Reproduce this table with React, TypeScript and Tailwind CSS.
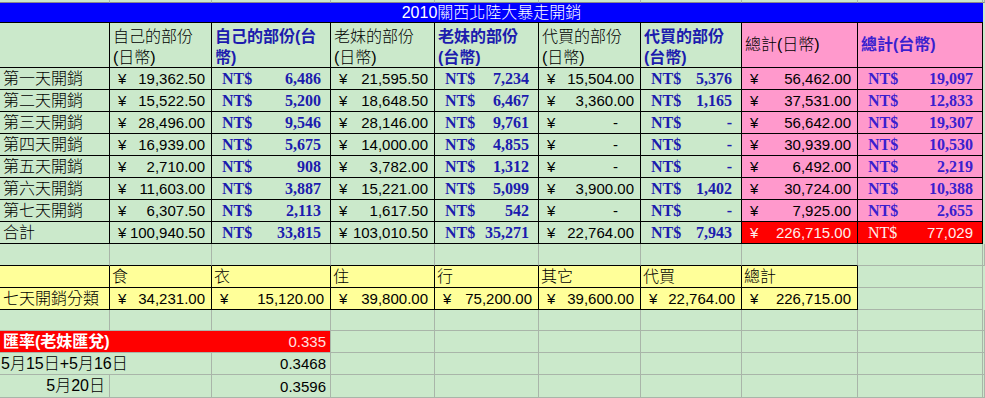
import React from 'react';

// column widths of the sheet (A..I plus the sliver at the right edge)
const COL = [
  'w-[110px]',
  'w-[102px]',
  'w-[119px]',
  'w-[104px]',
  'w-[104px]',
  'w-[102px]',
  'w-[101px]',
  'w-[116px]',
  'w-[125px]',
  'w-[2px]',
];

const GRID = 'border-[#a9b5a9]';
const GREEN = 'bg-[#cbe9cb]';
const PINK = 'bg-[#ff99cc]';
const YELLOW = 'bg-[#ffff99]';
const RED = 'bg-[#ff0000]';

const NUM = "font-['Liberation_Sans_Narrow','Liberation_Sans',sans-serif] text-[15px] font-normal";
const BOLD = "font-['Liberation_Serif',serif] font-bold text-[16px]";

type CellProps = {
  col: number;
  className?: string;
  children?: React.ReactNode;
};

const Cell: React.FC<CellProps> = ({ col, className = '', children }) => (
  <div className={`${COL[col]} shrink-0 box-border border-r border-b overflow-hidden whitespace-nowrap ${className}`}>{children}</div>
);

const Yen: React.FC<{ v: string; dash?: boolean }> = ({ v, dash }) => (
  <div className={`flex h-full items-center justify-between pl-[8px] ${dash ? 'pr-[22px]' : 'pr-[6px]'} ${NUM}`}>
    <span>¥</span>
    <span>{v}</span>
  </div>
);

const Nt: React.FC<{ v: string; tone: string }> = ({ v, tone }) => (
  <div className={`flex h-full items-center justify-between pl-[10px] pr-[9px] ${BOLD} ${tone}`}>
    <span>NT$</span>
    <span>{v}</span>
  </div>
);

const ROWS: string[][] = [
  ['第一天開銷', '19,362.50', '6,486', '21,595.50', '7,234', '15,504.00', '5,376', '56,462.00', '19,097'],
  ['第二天開銷', '15,522.50', '5,200', '18,648.50', '6,467', '3,360.00', '1,165', '37,531.00', '12,833'],
  ['第三天開銷', '28,496.00', '9,546', '28,146.00', '9,761', '-', '-', '56,642.00', '19,307'],
  ['第四天開銷', '16,939.00', '5,675', '14,000.00', '4,855', '-', '-', '30,939.00', '10,530'],
  ['第五天開銷', '2,710.00', '908', '3,782.00', '1,312', '-', '-', '6,492.00', '2,219'],
  ['第六天開銷', '11,603.00', '3,887', '15,221.00', '5,099', '3,900.00', '1,402', '30,724.00', '10,388'],
  ['第七天開銷', '6,307.50', '2,113', '1,617.50', '542', '-', '-', '7,925.00', '2,655'],
];

const CATS = ['食', '衣', '住', '行', '其它', '代買', '總計'];
const CAT_VALUES = ['34,231.00', '15,120.00', '39,800.00', '75,200.00', '39,600.00', '22,764.00', '226,715.00'];

const BLUE = 'text-[#1c1cae]';
const PURPLE = 'text-[#3a1fcf]';

export default function App() {
  return (
    <div className={`w-[985px] h-[398px] overflow-hidden ${GREEN} text-black font-['Liberation_Sans','Noto_Sans_CJK_TC',sans-serif] font-light text-[16px] leading-none`}>
      {/* strip of the row above */}
      <div className="flex h-[3px]">
        {COL.map((_, i) => (
          <Cell key={i} col={i} className={`${GRID} border-b-[#8a8a8a]`} />
        ))}
      </div>

      {/* title bar */}
      <div className="flex h-[20px]">
        <div className="w-[983px] box-border border-b border-black bg-[#0000ff] text-white flex items-center justify-center">
          2010關西北陸大暴走開銷
        </div>
        <div className="w-[2px] bg-[#cbe9cb]" />
      </div>

      {/* header row */}
      <div className="flex h-[45px]">
        <Cell col={0} className="border-black" />
        <Cell col={1} className="border-black px-[3px] pt-[3px] leading-[21px]">
          自己的部份<br />(日幣)
        </Cell>
        <Cell col={2} className={`border-black px-[3px] pt-[3px] leading-[21px] font-bold ${BLUE}`}>
          自己的部份(台<br />幣)
        </Cell>
        <Cell col={3} className="border-black px-[3px] pt-[3px] leading-[21px]">
          老妹的部份<br />(日幣)
        </Cell>
        <Cell col={4} className={`border-black px-[3px] pt-[3px] leading-[21px] font-bold ${BLUE}`}>
          老妹的部份<br />(台幣)
        </Cell>
        <Cell col={5} className="border-black px-[3px] pt-[3px] leading-[21px]">
          代買的部份<br />(日幣)
        </Cell>
        <Cell col={6} className={`border-black px-[3px] pt-[3px] leading-[21px] font-bold ${BLUE}`}>
          代買的部份<br />(台幣)
        </Cell>
        <Cell col={7} className={`border-black ${PINK} flex items-center px-[3px]`}>
          總計(日幣)
        </Cell>
        <Cell col={8} className={`border-black ${PINK} flex items-center px-[3px] font-bold ${PURPLE}`}>
          總計(台幣)
        </Cell>
        <div className="w-[2px]" />
      </div>

      {/* day rows */}
      {ROWS.map(r => (
        <div key={r[0]} className="flex h-[22px]">
          <Cell col={0} className="border-black flex items-center px-[3px]">{r[0]}</Cell>
          <Cell col={1} className="border-black"><Yen v={r[1]} /></Cell>
          <Cell col={2} className="border-black"><Nt v={r[2]} tone={BLUE} /></Cell>
          <Cell col={3} className="border-black"><Yen v={r[3]} /></Cell>
          <Cell col={4} className="border-black"><Nt v={r[4]} tone={BLUE} /></Cell>
          <Cell col={5} className="border-black"><Yen v={r[5]} dash={r[5] === '-'} /></Cell>
          <Cell col={6} className="border-black"><Nt v={r[6]} tone={BLUE} /></Cell>
          <Cell col={7} className={`border-black ${PINK}`}><Yen v={r[7]} /></Cell>
          <Cell col={8} className={`border-black ${PINK}`}><Nt v={r[8]} tone={PURPLE} /></Cell>
          <div className="w-[2px]" />
        </div>
      ))}

      {/* totals */}
      <div className="flex h-[22px]">
        <Cell col={0} className="border-black flex items-center px-[3px]">合計</Cell>
        <Cell col={1} className="border-black"><Yen v="100,940.50" /></Cell>
        <Cell col={2} className="border-black"><Nt v="33,815" tone={BLUE} /></Cell>
        <Cell col={3} className="border-black"><Yen v="103,010.50" /></Cell>
        <Cell col={4} className="border-black"><Nt v="35,271" tone={BLUE} /></Cell>
        <Cell col={5} className="border-black"><Yen v="22,764.00" /></Cell>
        <Cell col={6} className="border-black"><Nt v="7,943" tone={BLUE} /></Cell>
        <Cell col={7} className={`border-black ${RED} text-[#ffecec]`}><Yen v="226,715.00" /></Cell>
        <Cell col={8} className={`border-black ${RED} text-[#ffecec]`}>
          <div className="flex h-full items-center justify-between pl-[10px] pr-[9px] font-['Liberation_Serif',serif] font-normal text-[16px]">
            <span>NT$</span>
            <span className={NUM}>77,029</span>
          </div>
        </Cell>
        <div className="w-[2px]" />
      </div>

      {/* blank row */}
      <div className="flex h-[22px]">
        {COL.map((_, i) => (
          <Cell key={i} col={i} className={i < 8 ? `${GRID} border-b-black` : GRID} />
        ))}
      </div>

      {/* category header */}
      <div className="flex h-[22px]">
        <Cell col={0} className={`border-black ${YELLOW}`} />
        {CATS.map((c, i) => (
          <Cell key={c} col={i + 1} className={`border-black ${YELLOW} flex items-end px-[2px] pb-[2px]`}>{c}</Cell>
        ))}
        <Cell col={8} className={GRID} />
        <div className="w-[2px]" />
      </div>

      {/* category values */}
      <div className="flex h-[22px]">
        <Cell col={0} className={`border-black ${YELLOW} flex items-center px-[3px]`}>七天開銷分類</Cell>
        {CAT_VALUES.map((v, i) => (
          <Cell key={v + i} col={i + 1} className={`border-black ${YELLOW}`}><Yen v={v} /></Cell>
        ))}
        <Cell col={8} className={GRID} />
        <div className="w-[2px]" />
      </div>

      {/* blank row */}
      <div className="flex h-[21px]">
        {COL.map((_, i) => (
          <Cell key={i} col={i} className={GRID} />
        ))}
      </div>

      {/* exchange rate */}
      <div className="flex h-[22px]">
        <div className={`w-[331px] shrink-0 box-border border-r border-b ${GRID} ${RED} flex items-center justify-between pl-[3px] pr-[4px]`}>
          <span className="font-bold text-white">匯率(老妹匯兌)</span>
          <span className={`${NUM} text-[#ffe0e0]`}>0.335</span>
        </div>
        {COL.slice(3).map((_, i) => (
          <Cell key={i} col={i + 3} className={GRID} />
        ))}
      </div>

      <div className="flex h-[22px]">
        <div className={`w-[212px] shrink-0 box-border border-r border-b ${GRID} flex items-center pl-[1px]`}>
          5月15日+5月16日
        </div>
        <Cell col={2} className={`${GRID} flex items-center justify-end pr-[4px] ${NUM}`}>0.3468</Cell>
        {COL.slice(3).map((_, i) => (
          <Cell key={i} col={i + 3} className={GRID} />
        ))}
      </div>

      <div className="flex h-[23px]">
        <Cell col={0} className={`${GRID} flex items-center justify-end pr-[4px]`}>5月20日</Cell>
        <Cell col={1} className={GRID} />
        <Cell col={2} className={`${GRID} flex items-center justify-end pr-[4px] ${NUM}`}>0.3596</Cell>
        {COL.slice(3).map((_, i) => (
          <Cell key={i} col={i + 3} className={GRID} />
        ))}
      </div>
    </div>
  );
}
